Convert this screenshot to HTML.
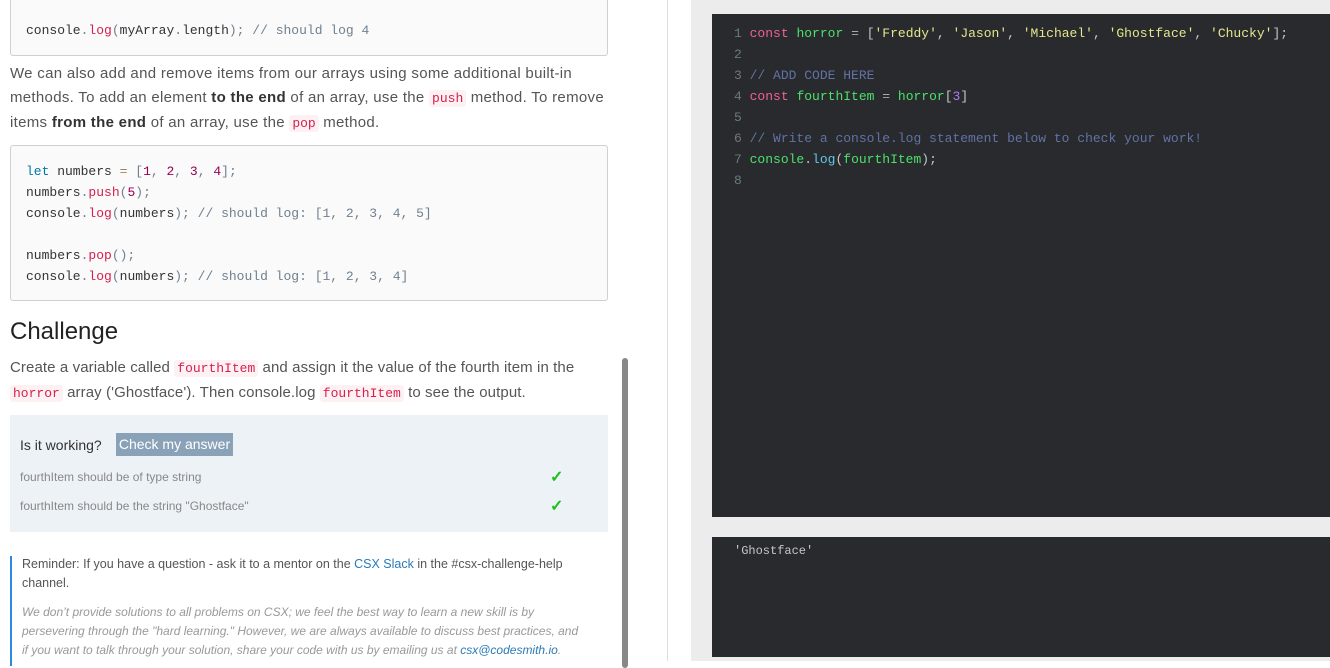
<!DOCTYPE html>
<html><head><style>
body{margin:0;width:1330px;height:661px;overflow:hidden;background:#fff;font-family:"Liberation Sans",sans-serif;position:relative}
.mono{font-family:"Liberation Mono","DejaVu Sans Mono",monospace}
.left{position:absolute;left:0;top:0;width:667px;height:661px;border-right:1px solid #ddd;background:#fff}
.cb{position:absolute;left:10px;width:596px;background:#fafafa;border:1px solid #d0d0d0;border-radius:3px;font-size:13px;color:#333}
.cb div{height:21px;line-height:21px;padding-left:15px;white-space:pre}
.p{position:absolute;left:10px;width:600px;font-size:15px;letter-spacing:0.3px;line-height:24px;color:#555}
.ic{font-family:"Liberation Mono",monospace;font-size:13px;letter-spacing:0;color:#d6204e;background:#fdf1f3;padding:1px 3px;border-radius:3px}
.r{color:#d6204e}.g{color:#708090}.b{color:#07a}.m{color:#905}
.right{position:absolute;left:691px;top:0;width:639px;height:661px;background:#ececec}
.ed{position:absolute;left:21px;top:14px;width:618px;height:503px;background:#282a2e;font-size:13px}
.ed div{position:absolute;left:22px;height:21px;line-height:21px;white-space:pre;color:#c5c8c6}
.n{color:#6c7a7a}
.out{position:absolute;left:21px;top:537px;width:618px;height:120px;background:#282a2e;color:#c5c8c6;font-size:12px}
</style></head><body>
<div class="left">
<div class="cb mono" style="top:-5px;height:59px"><div style="margin-top:24px">console<span class="g">.</span><span class="r">log</span><span class="g">(</span>myArray<span class="g">.</span>length<span class="g">);</span> <span class="g">// should log 4</span></div></div>
<div class="p" style="top:62px">We can also add and remove items from our arrays using some additional built-in methods. To add an element <b style="color:#333">to the end</b> of an array, use the <span class="ic">push</span> method. To remove items <b style="color:#333">from the end</b> of an array, use the <span class="ic">pop</span> method.</div>
<div class="cb mono" style="top:145px;height:154px"><div style="margin-top:15px"><span class="b">let</span> numbers <span style="color:#a67f59">=</span> <span class="g">[</span><span class="m">1</span><span class="g">, </span><span class="m">2</span><span class="g">, </span><span class="m">3</span><span class="g">, </span><span class="m">4</span><span class="g">];</span></div><div>numbers<span class="g">.</span><span class="r">push</span><span class="g">(</span><span class="m">5</span><span class="g">);</span></div><div>console<span class="g">.</span><span class="r">log</span><span class="g">(</span>numbers<span class="g">);</span> <span class="g">// should log: [1, 2, 3, 4, 5]</span></div><div> </div><div>numbers<span class="g">.</span><span class="r">pop</span><span class="g">();</span></div><div>console<span class="g">.</span><span class="r">log</span><span class="g">(</span>numbers<span class="g">);</span> <span class="g">// should log: [1, 2, 3, 4]</span></div></div>
<div style="position:absolute;left:10px;top:318px;font-size:24px;color:#222">Challenge</div>
<div class="p" style="top:356px;width:590px;letter-spacing:0.1px">Create a variable called <span class="ic">fourthItem</span> and assign it the value of the fourth item in the <span class="ic">horror</span> array ('Ghostface'). Then console.log <span class="ic">fourthItem</span> to see the output.</div>
<div style="position:absolute;left:10px;top:415px;width:598px;height:117px;background:#edf2f7">
<div style="position:absolute;left:10px;top:22px;font-size:14px;color:#333">Is it working?</div>
<div style="position:absolute;left:106px;top:18px;width:117px;height:23px;background:#8aa2b8;color:#fff;font-size:14px;line-height:23px;text-align:center">Check my answer</div>
<div style="position:absolute;left:10px;top:55px;font-size:12px;color:#888">fourthItem should be of type string</div>
<div style="position:absolute;left:10px;top:84px;font-size:12px;color:#888">fourthItem should be the string "Ghostface"</div>
<div style="position:absolute;left:540px;top:52px;color:#1ec01e;font-size:16px;font-weight:bold">✓</div>
<div style="position:absolute;left:540px;top:81px;color:#1ec01e;font-size:16px;font-weight:bold">✓</div>
</div>
<div style="position:absolute;left:10px;top:556px;width:580px;height:110px;border-left:2px solid #2b8ae0;padding-left:10px;font-size:12.5px;line-height:19px">
<div style="color:#555;width:560px;margin-top:-1px">Reminder: If you have a question - ask it to a mentor on the <span style="color:#2a7ab8">CSX Slack</span> in the #csx-challenge-help channel.</div>
<div style="color:#999;font-style:italic;margin-top:10px;white-space:nowrap;font-size:12px">We don’t provide solutions to all problems on CSX; we feel the best way to learn a new skill is by<br>persevering through the "hard learning." However, we are always available to discuss best practices, and<br>if you want to talk through your solution, share your code with us by emailing us at <span style="color:#2a7ab8">csx@codesmith.io</span>.</div>
</div>
<div style="position:absolute;left:622px;top:358px;width:6px;height:310px;background:#888;border-radius:3px"></div>
</div>
<div class="right">
<div class="ed mono">
<div style="top:9px"><span class="n">1</span> <span style="color:#f06292">const</span> <span style="color:#4ee06a">horror</span> <span style="color:#aaa">=</span> [<span style="color:#e6e68a">'Freddy'</span>, <span style="color:#e6e68a">'Jason'</span>, <span style="color:#e6e68a">'Michael'</span>, <span style="color:#e6e68a">'Ghostface'</span>, <span style="color:#e6e68a">'Chucky'</span>];</div>
<div style="top:30px"><span class="n">2</span></div>
<div style="top:51px"><span class="n">3</span> <span style="color:#6272a4">// ADD CODE HERE</span></div>
<div style="top:72px"><span class="n">4</span> <span style="color:#f06292">const</span> <span style="color:#4ee06a">fourthItem</span> <span style="color:#aaa">=</span> <span style="color:#4ee06a">horror</span>[<span style="color:#b07cf0">3</span>]</div>
<div style="top:93px"><span class="n">5</span></div>
<div style="top:114px"><span class="n">6</span> <span style="color:#6272a4">// Write a console.log statement below to check your work!</span></div>
<div style="top:135px"><span class="n">7</span> <span style="color:#4ee06a">console</span>.<span style="color:#5fc8e8">log</span>(<span style="color:#4ee06a">fourthItem</span>);</div>
<div style="top:156px"><span class="n">8</span></div>
</div>
<div class="out mono"><div style="position:absolute;left:22px;top:7px">'Ghostface'</div></div>
</div>
</body></html>
